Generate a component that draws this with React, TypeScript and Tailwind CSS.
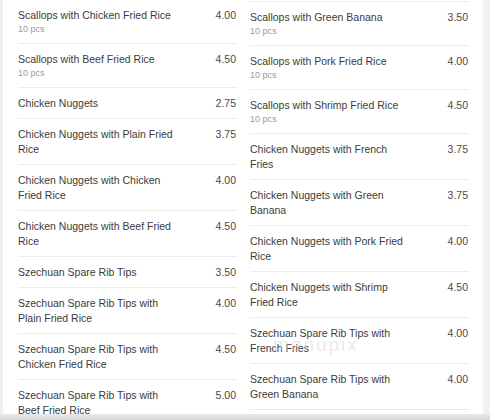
import React from 'react';

interface Item {
  name: string;
  price: string;
  note?: string;
}

const leftItems: Item[] = [
  { name: 'Scallops with Chicken Fried Rice', price: '4.00', note: '10 pcs' },
  { name: 'Scallops with Beef Fried Rice', price: '4.50', note: '10 pcs' },
  { name: 'Chicken Nuggets', price: '2.75' },
  { name: 'Chicken Nuggets with Plain Fried Rice', price: '3.75' },
  { name: 'Chicken Nuggets with Chicken Fried Rice', price: '4.00' },
  { name: 'Chicken Nuggets with Beef Fried Rice', price: '4.50' },
  { name: 'Szechuan Spare Rib Tips', price: '3.50' },
  { name: 'Szechuan Spare Rib Tips with Plain Fried Rice', price: '4.00' },
  { name: 'Szechuan Spare Rib Tips with Chicken Fried Rice', price: '4.50' },
  { name: 'Szechuan Spare Rib Tips with Beef Fried Rice', price: '5.00' },
];

const rightItems: Item[] = [
  { name: 'Scallops with Green Banana', price: '3.50', note: '10 pcs' },
  { name: 'Scallops with Pork Fried Rice', price: '4.00', note: '10 pcs' },
  { name: 'Scallops with Shrimp Fried Rice', price: '4.50', note: '10 pcs' },
  { name: 'Chicken Nuggets with French Fries', price: '3.75' },
  { name: 'Chicken Nuggets with Green Banana', price: '3.75' },
  { name: 'Chicken Nuggets with Pork Fried Rice', price: '4.00' },
  { name: 'Chicken Nuggets with Shrimp Fried Rice', price: '4.50' },
  { name: 'Szechuan Spare Rib Tips with French Fries', price: '4.00' },
  { name: 'Szechuan Spare Rib Tips with Green Banana', price: '4.00' },
];

const MenuRow: React.FC<{ item: Item }> = ({ item }) => (
  <div className="flex items-start justify-between border-b border-[#ececec] pt-[8px] pb-[7px]">
    <div className="w-[159px]">
      <div className="text-[10.5px] leading-[15px] text-[#3b3b3b]">{item.name}</div>
      {item.note && <div className="text-[9px] leading-[13px] text-[#9a9a9a]">{item.note}</div>}
    </div>
    <div className="text-[10.5px] leading-[15px] text-[#4a4a4a] pr-[1px]">{item.price}</div>
  </div>
);

const App: React.FC = () => {
  return (
    <div
      className="relative flex flex-col w-[490px] h-[420px] overflow-hidden bg-white"
      style={{ fontFamily: '"Liberation Sans", Arial, sans-serif' }}
    >
      <div className="flex h-[414px]">
        <div className="w-[3px] bg-[#efefef]" />
        <div className="flex flex-1 gap-[11px] pl-[14px] pr-[14px]">
          {/* left column */}
          <div className="w-[220px] -mt-[1px] border-t border-[#ececec] pl-[1px]">
            {leftItems.map((item) => (
              <MenuRow key={item.name} item={item} />
            ))}
          </div>
          {/* right column */}
          <div className="w-[221px] mt-[1px] border-t border-[#ececec] pl-[2px]">
            {rightItems.map((item) => (
              <MenuRow key={item.name} item={item} />
            ))}
          </div>
        </div>
        <div className="w-[7px] bg-[#f1f1f6]" />
      </div>
      <div className="h-[6px] bg-gradient-to-b from-[#e9e9e9] to-[#d6d6d6]" />

      {/* watermark */}
      <div className="absolute left-[273px] top-[331px] text-[19px] tracking-[2px] text-[#d4d4d4]/50 select-none">
        menupix
      </div>
    </div>
  );
};

export default App;
